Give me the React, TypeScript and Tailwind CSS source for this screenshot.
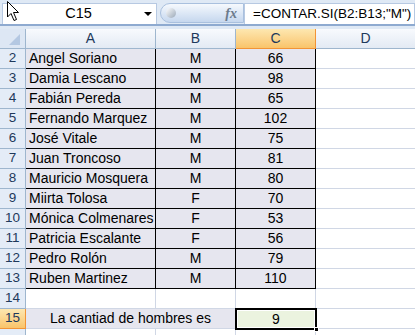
import React from 'react';

const rows = [
  { n: 2, name: 'Angel Soriano', sex: 'M', val: '66' },
  { n: 3, name: 'Damia Lescano', sex: 'M', val: '98' },
  { n: 4, name: 'Fabián Pereda', sex: 'M', val: '65' },
  { n: 5, name: 'Fernando Marquez', sex: 'M', val: '102' },
  { n: 6, name: 'José Vitale', sex: 'M', val: '75' },
  { n: 7, name: 'Juan Troncoso', sex: 'M', val: '81' },
  { n: 8, name: 'Mauricio Mosquera', sex: 'M', val: '80' },
  { n: 9, name: 'Miirta Tolosa', sex: 'F', val: '70' },
  { n: 10, name: 'Mónica Colmenares', sex: 'F', val: '53' },
  { n: 11, name: 'Patricia Escalante', sex: 'F', val: '56' },
  { n: 12, name: 'Pedro Rolón', sex: 'M', val: '79' },
  { n: 13, name: 'Ruben Martinez', sex: 'M', val: '110' },
];

const RowHead: React.FC<{ n: number; active?: boolean }> = ({ n, active }) => (
  <div
    className={`w-[26px] h-full flex items-center justify-center border-r border-b text-[13.5px] ${
      active
        ? 'bg-gradient-to-b from-[#fde7b0] to-[#f9c46a] border-[#f29436] text-[#1e395b]'
        : 'bg-[#e4ecf7] border-[#9eb6ce] text-[#1e395b]'
    }`}
  >
    {n}
  </div>
);

const App: React.FC = () => {
  return (
    <div className="relative w-[415px] h-[335px] overflow-hidden bg-white font-['Liberation_Sans',sans-serif] text-black">
      {/* formula bar */}
      <div className="h-[29px] bg-[#dfe9f5] pt-[3px]">
        <div className="h-[23px] flex border-b-2 border-[#8eaad0]">
          <div className="w-[155px] ml-[2px] bg-white border border-[#b7c9e2] border-b-0 flex items-center relative">
            <span className="flex-1 text-center text-[14.5px] pl-[10px]">C15</span>
            <span className="w-0 h-0 border-l-[4px] border-r-[4px] border-t-[4px] border-l-transparent border-r-transparent border-t-black mr-[4px]" />
          </div>
          <div className="w-[84px] ml-[3px] mb-[1px] rounded-l-full bg-gradient-to-b from-[#f6f9fd] via-[#dde8f6] to-[#c6d7ee] border border-[#a9c0de] flex items-center relative">
            <span className="w-[10px] h-[10px] rounded-full ml-[5px] bg-gradient-to-br from-[#ffffff] to-[#9aa8b8]" />
            <span className="ml-auto mr-[6px] font-['Liberation_Serif',serif] italic font-bold text-[14px] text-[#6b7a8c]">fx</span>
          </div>
          <div className="flex-1 bg-white border border-[#b7c9e2] border-b-0 flex items-center pl-[8px] text-[13.5px]">
            =CONTAR.SI(B2:B13;"M")
          </div>
        </div>
      </div>

      {/* column headers */}
      <div className="h-[20px] flex text-[14px] text-[#1e395b]">
        <div className="w-[26px] h-full bg-[#dde7f4] border-r border-b border-[#9eb6ce] relative">
          <svg width="26" height="20" className="absolute inset-0">
            <polygon points="20,5 20,16 9,16" fill="#b4c8e2" />
          </svg>
        </div>
        <div className="w-[130px] h-full flex items-center justify-center bg-gradient-to-b from-[#f8fafd] to-[#e3eaf4] border-r border-b border-[#9eb6ce]">A</div>
        <div className="w-[80px] h-full flex items-center justify-center bg-gradient-to-b from-[#f8fafd] to-[#e3eaf4] border-r border-b border-[#9eb6ce]">B</div>
        <div className="w-[80px] h-full flex items-center justify-center bg-gradient-to-b from-[#fde7b0] to-[#f9c46a] border-r border-b border-[#f29436]">C</div>
        <div className="flex-1 h-full flex items-center justify-center bg-gradient-to-b from-[#f8fafd] to-[#e3eaf4] border-b border-[#9eb6ce]">D</div>
      </div>

      {/* data rows */}
      {rows.map((r) => (
        <div key={r.n} className="h-[20px] flex text-[14px]">
          <RowHead n={r.n} />
          <div className="w-[130px] h-full bg-[#e6e6ef] border-r border-b border-black flex items-center pl-[3px]">{r.name}</div>
          <div className="w-[80px] h-full bg-[#e6e6ef] border-r border-b border-black flex items-center justify-center">{r.sex}</div>
          <div className="w-[80px] h-full bg-[#e6e6ef] border-r border-b border-black flex items-center justify-center">{r.val}</div>
          <div className="flex-1 h-full border-b border-[#d0d7e5]" />
        </div>
      ))}

      {/* row 14 */}
      <div className="h-[20px] flex text-[14px]">
        <RowHead n={14} />
        <div className="w-[130px] h-full border-r border-b border-[#d0d7e5]" />
        <div className="w-[80px] h-full border-r border-b border-[#d0d7e5]" />
        <div className="w-[80px] h-full border-r border-b border-[#d0d7e5]" />
        <div className="flex-1 h-full border-b border-[#d0d7e5]" />
      </div>

      {/* row 15 */}
      <div className="h-[20px] flex text-[14px]">
        <RowHead n={15} active />
        <div className="w-[210px] h-full bg-[#e6e6ef] border-r border-b border-[#d0d7e5] flex items-center justify-center">
          La cantiad de hombres es
        </div>
        <div className="w-[80px] h-full border-r border-b border-[#d0d7e5]" />
        <div className="flex-1 h-full border-b border-[#d0d7e5]" />
      </div>

      {/* row 16 */}
      <div className="h-[20px] flex">
        <div className="w-[26px] h-full bg-[#e4ecf7] border-r border-[#9eb6ce]" />
        <div className="w-[130px] h-full border-r border-[#d0d7e5]" />
        <div className="w-[80px] h-full border-r border-[#d0d7e5]" />
        <div className="w-[80px] h-full border-r border-[#d0d7e5]" />
      </div>

      {/* selected cell C15 */}
      <div className="absolute left-[235px] top-[308px] w-[82px] h-[22px] border-2 border-black bg-[#ebf3df] shadow-[inset_0_0_0_1px_#fff] flex items-center justify-center text-[14px]">
        9
        <span className="absolute right-[-4px] bottom-[-4px] w-[5px] h-[5px] bg-black border border-white" />
      </div>

      {/* mouse pointer */}
      <svg className="absolute left-[7px] top-[1px]" width="14" height="22" viewBox="0 0 14 22">
        <polygon points="0.5,0.5 0.5,16 4,12.5 7,19.5 9.5,18.5 6.5,11.5 11.5,11.5" fill="#fff" stroke="#000" strokeWidth="1" />
      </svg>
    </div>
  );
};

export default App;
